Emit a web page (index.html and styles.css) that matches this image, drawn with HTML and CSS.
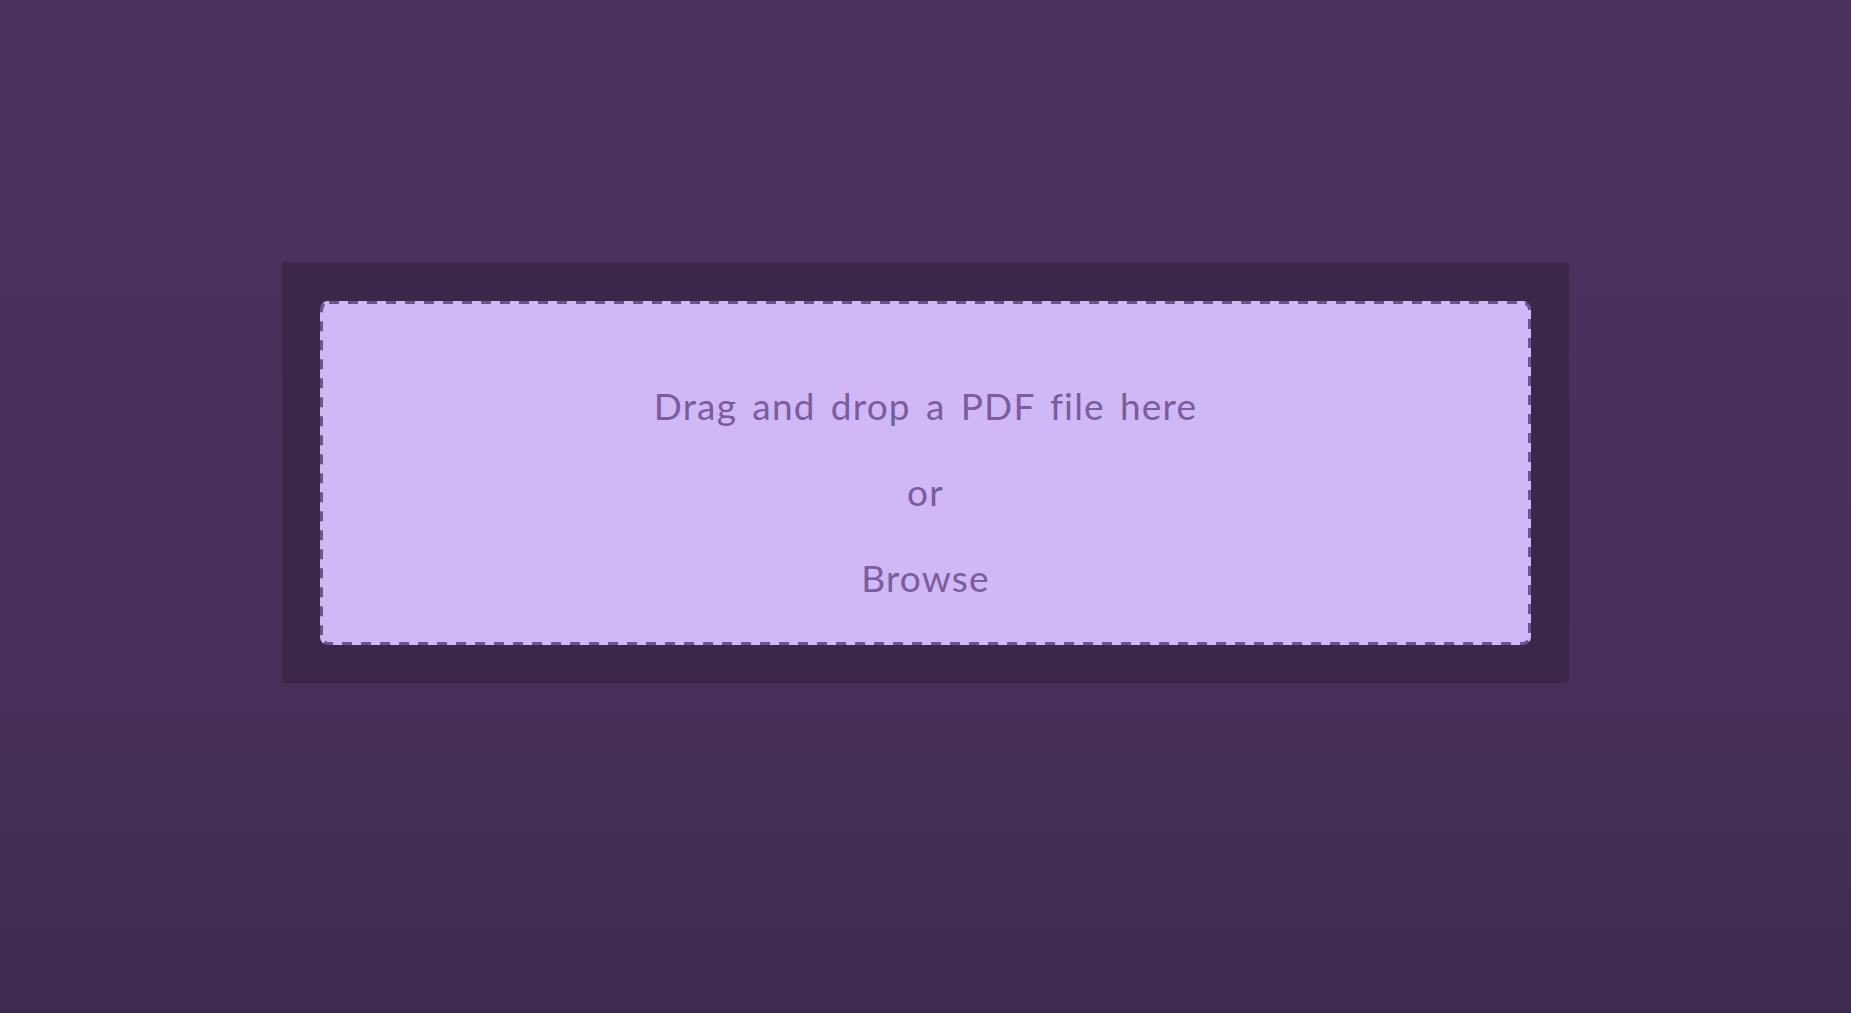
FILE: index.html
```html
<!DOCTYPE html>
<html lang="en">
<head>
<meta charset="utf-8">
<title>PDF upload</title>
<link rel="stylesheet" href="styles.css">
</head>
<body>
<main class="page">
  <section class="panel">
    <div class="dropzone">
      <p class="line">Drag and drop a PDF file here</p>
      <p class="line">or</p>
      <p class="line browse">Browse</p>
    </div>
  </section>
</main>
</body>
</html>
```
FILE: styles.css
```css
html, body {
  margin: 0;
  padding: 0;
}
body {
  width: 1851px;
  height: 1013px;
  background: linear-gradient(180deg, #4a335e 0%, #47315b 60%, #3f2b4f 100%);
  font-family: Lato, "Open Sans", sans-serif;
  overflow: hidden;
}
.page {
  display: flex;
  justify-content: center;
  padding-top: 262px;
}
.panel {
  width: 1287px;
  box-sizing: border-box;
  padding: 39px 38px 38px;
  background: #3a2749;
  border-radius: 4px;
}
.dropzone {
  box-sizing: border-box;
  height: 344px;
  padding-top: 62px;
  background-color: #cfb8f5;
  background-image: url("data:image/svg+xml;utf8,<svg xmlns='http://www.w3.org/2000/svg' width='100%' height='100%'><rect width='100%' height='100%' fill='none' rx='9' ry='9' stroke='%236a5490' stroke-width='6' stroke-dasharray='10 9'/></svg>");
  border-radius: 8px;
  display: flex;
  flex-direction: column;
  align-items: center;
}
.line {
  margin: 0;
  line-height: 86px;
  font-size: 37px;
  color: #7a5c9f;
  letter-spacing: 1.2px;
  word-spacing: 4.5px;
}
```
